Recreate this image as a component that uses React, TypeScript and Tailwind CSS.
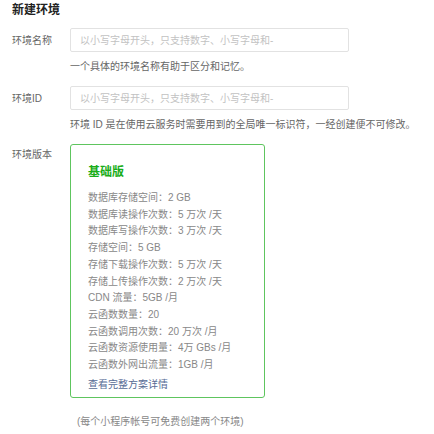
const font = { fontFamily: '"Liberation Sans", "Noto Sans CJK SC", sans-serif' };

const quota = [
  "数据库存储空间：2 GB",
  "数据库读操作次数：5 万次 /天",
  "数据库写操作次数：3 万次 /天",
  "存储空间：5 GB",
  "存储下载操作次数：5 万次 /天",
  "存储上传操作次数：2 万次 /天",
  "CDN 流量：5GB /月",
  "云函数数量：20",
  "云函数调用次数：20 万次 /月",
  "云函数资源使用量：4万 GBs /月",
  "云函数外网出流量：1GB /月",
];

function Field({ label, hint }: { label: string; hint: string }) {
  return (
    <div className="flex">
      <div className="flex h-[24px] w-[58px] shrink-0 items-center text-[10px] text-[#666]">{label}</div>
      <div className="flex flex-col">
        <input
          className="h-[24px] w-[279px] rounded-[2px] border border-[#e2e2e2] px-[9px] text-[10px] text-[#333] outline-none placeholder:text-[#c2c2c2]"
          style={font}
          placeholder="以小写字母开头，只支持数字、小写字母和-"
        />
        <p className="mt-[7px] whitespace-nowrap text-[10px] leading-[16px] text-[#666]">{hint}</p>
      </div>
    </div>
  );
}

export default function App() {
  return (
    <div className="h-[434px] w-[434px] bg-white pl-[12px] pt-[2px]" style={font}>
      <h1 className="text-[12px] font-bold leading-[16px] text-[#222]">新建环境</h1>
      <div className="mt-[10px] flex flex-col gap-[11px]">
        <Field label="环境名称" hint="一个具体的环境名称有助于区分和记忆。" />
        <Field label="环境ID" hint="环境 ID 是在使用云服务时需要用到的全局唯一标识符，一经创建便不可修改。" />
        <div className="flex">
          <div className="w-[58px] shrink-0 pt-[3px] text-[10px] leading-[16px] text-[#666]">环境版本</div>
          <div className="flex flex-col">
            <div className="w-[195px] rounded-[3px] border border-[#5ec55e] pb-[4px] pl-[17px] pt-[19px]">
              <div className="text-[12px] font-bold leading-[16px] text-[#1aad19]">基础版</div>
              <ul className="mt-[10px] text-[10px] leading-[16.7px] text-[#888]">
                {quota.map((q) => (
                  <li key={q}>{q}</li>
                ))}
              </ul>
              <a href="#" className="mt-[3px] block text-[10px] leading-[16.7px] text-[#576b95]">查看完整方案详情</a>
            </div>
            <p className="ml-[7px] mt-[16px] text-[10px] leading-[16px] text-[#888]">(每个小程序帐号可免费创建两个环境)</p>
          </div>
        </div>
      </div>
    </div>
  );
}
